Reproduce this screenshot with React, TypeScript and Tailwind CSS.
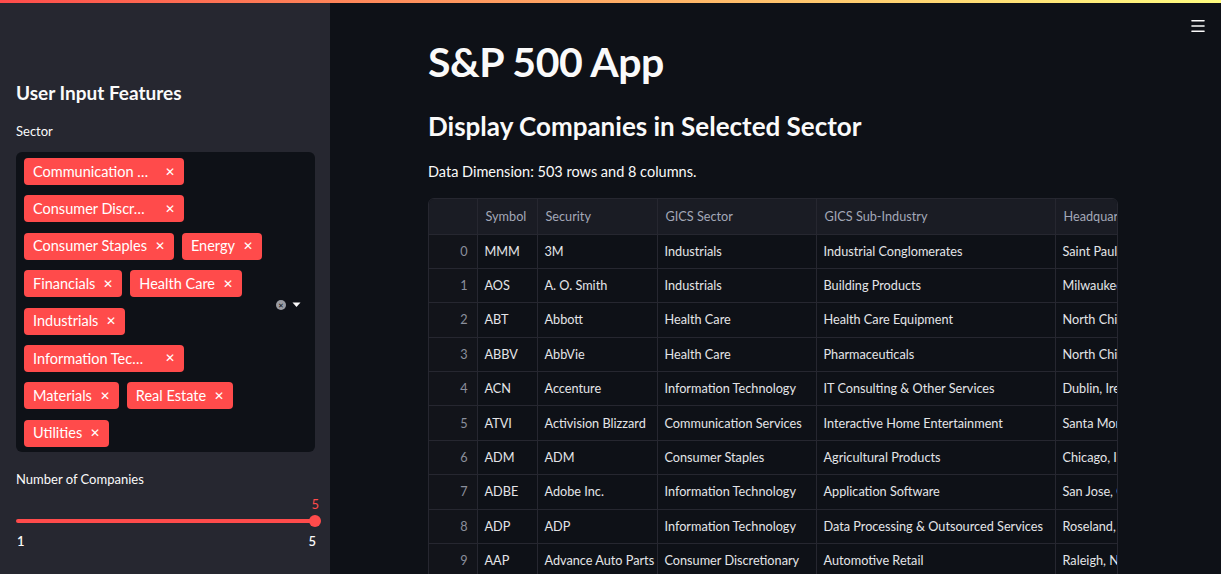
import { Menu } from 'lucide-react';

const tags: { label: string; w?: string }[][] = [
  [{ label: 'Communication …', w: 'w-[160px]' }],
  [{ label: 'Consumer Discr…', w: 'w-[160px]' }],
  [{ label: 'Consumer Staples' }, { label: 'Energy' }],
  [{ label: 'Financials' }, { label: 'Health Care' }],
  [{ label: 'Industrials' }],
  [{ label: 'Information Tec…', w: 'w-[160px]' }],
  [{ label: 'Materials' }, { label: 'Real Estate' }],
  [{ label: 'Utilities' }],
];

const rows = [
  ['MMM', '3M', 'Industrials', 'Industrial Conglomerates', 'Saint Paul, Minnesota'],
  ['AOS', 'A. O. Smith', 'Industrials', 'Building Products', 'Milwaukee, Wisconsin'],
  ['ABT', 'Abbott', 'Health Care', 'Health Care Equipment', 'North Chicago, Illinois'],
  ['ABBV', 'AbbVie', 'Health Care', 'Pharmaceuticals', 'North Chicago, Illinois'],
  ['ACN', 'Accenture', 'Information Technology', 'IT Consulting & Other Services', 'Dublin, Ireland'],
  ['ATVI', 'Activision Blizzard', 'Communication Services', 'Interactive Home Entertainment', 'Santa Monica, California'],
  ['ADM', 'ADM', 'Consumer Staples', 'Agricultural Products', 'Chicago, Illinois'],
  ['ADBE', 'Adobe Inc.', 'Information Technology', 'Application Software', 'San Jose, California'],
  ['ADP', 'ADP', 'Information Technology', 'Data Processing & Outsourced Services', 'Roseland, New Jersey'],
  ['AAP', 'Advance Auto Parts', 'Consumer Discretionary', 'Automotive Retail', 'Raleigh, North Carolina'],
];

function Tag({ label, w }: { label: string; w?: string }) {
  return (
    <div
      className={`flex items-center justify-between h-[27px] rounded-[4px] bg-[#ff4b4b] pl-[9px] pr-[9px] gap-[8px] text-[14.5px] text-white ${w ?? ''}`}
    >
      <span className="whitespace-nowrap">{label}</span>
      <span className="text-[12px] leading-none">✕</span>
    </div>
  );
}

export default function App() {
  return (
    <div className="h-[574px] w-[1221px] overflow-hidden bg-[#0e1117] font-['Lato',sans-serif] text-[#fafafa]">
      <div className="h-[3px] bg-gradient-to-r from-[#ff4b4b] to-[#fffd80]" />
      <div className="flex h-[571px]">
        {/* Sidebar */}
        <aside className="w-[330px] shrink-0 bg-[#262730] px-[16px]">
          <h2 className="mt-[78px] text-[19px] font-bold leading-[24px]">User Input Features</h2>
          <p className="mt-[18px] text-[13px] leading-[16px]">Sector</p>
          <div className="mt-[13px] flex h-[300px] w-[299px] rounded-[6px] bg-[#0e1117] pl-[8px] pt-[6px]">
            <div className="flex flex-1 flex-col gap-[10.4px]">
              {tags.map((row, i) => (
                <div key={i} className="flex gap-[8px]">
                  {row.map((t) => (
                    <Tag key={t.label} label={t.label} w={t.w} />
                  ))}
                </div>
              ))}
            </div>
            <div className="flex items-center gap-[6px] pr-[14px]">
              <span className="flex h-[10px] w-[10px] items-center justify-center rounded-full bg-[#9a9ca3] text-[7px] leading-none text-[#0e1117]">
                ✕
              </span>
              <svg width="9" height="6" viewBox="0 0 9 6">
                <path d="M0.5 0.5 L8.5 0.5 L4.5 5 Z" fill="#fafafa" />
              </svg>
            </div>
          </div>
          <p className="mt-[19px] text-[13px] leading-[16px]">Number of Companies</p>
          <div className="relative mt-[9px] h-[60px] w-[299px]">
            <span className="absolute right-[-4px] top-0 text-[13px] leading-[16px] text-[#ff4b4b]">5</span>
            <div className="absolute left-0 right-0 top-[23px] h-[4px] rounded-full bg-[#ff4b4b]" />
            <div className="absolute right-[-6px] top-[19px] h-[12px] w-[12px] rounded-full bg-[#ff4b4b]" />
            <span className="absolute left-[1px] top-[37px] text-[13px] leading-[16px] font-semibold">1</span>
            <span className="absolute right-[-1px] top-[37px] text-[13px] leading-[16px] font-semibold">5</span>
          </div>
        </aside>

        {/* Main */}
        <main className="relative flex-1 pl-[98px]">
          <Menu className="absolute right-[14px] top-[14px] h-[18px] w-[18px] text-[#fafafa]" strokeWidth={2.2} />
          <h1 className="mt-[36px] text-[41px] font-bold leading-[46px] tracking-[-0.5px]">S&amp;P 500 App</h1>
          <h2 className="mt-[26px] text-[26px] font-bold leading-[30px]">Display Companies in Selected Sector</h2>
          <p className="mt-[21px] text-[14.5px] leading-[20px]">Data Dimension: 503 rows and 8 columns.</p>
          <div className="mt-[16px] w-[690px] overflow-hidden rounded-t-[6px] border border-[#262730]">
            <table className="w-[807px] table-fixed border-collapse text-[12.7px] whitespace-nowrap">
              <colgroup>
                <col className="w-[48px]" />
                <col className="w-[60px]" />
                <col className="w-[120px]" />
                <col className="w-[159px]" />
                <col className="w-[239px]" />
                <col className="w-[181px]" />
              </colgroup>
              <thead>
                <tr className="h-[35px] bg-[#1a1c24] text-[#a3a8b8]">
                  <th className="border-r border-[#262730]" />
                  {['Symbol', 'Security', 'GICS Sector', 'GICS Sub-Industry', 'Headquarters Location'].map((h) => (
                    <th key={h} className="overflow-hidden border-r border-[#262730] px-[8px] text-left font-normal">
                      {h}
                    </th>
                  ))}
                </tr>
              </thead>
              <tbody>
                {rows.map((r, i) => (
                  <tr key={i} className="h-[34.4px] border-t border-[#262730]">
                    <td className="border-r border-[#262730] bg-[#12141a] pr-[9px] text-right text-[#8b8f9c]">{i}</td>
                    {r.map((c, j) => (
                      <td key={j} className="overflow-hidden border-r border-[#262730] px-[7px] text-[#e4e5e8]">
                        {c}
                      </td>
                    ))}
                  </tr>
                ))}
              </tbody>
            </table>
          </div>
        </main>
      </div>
    </div>
  );
}
